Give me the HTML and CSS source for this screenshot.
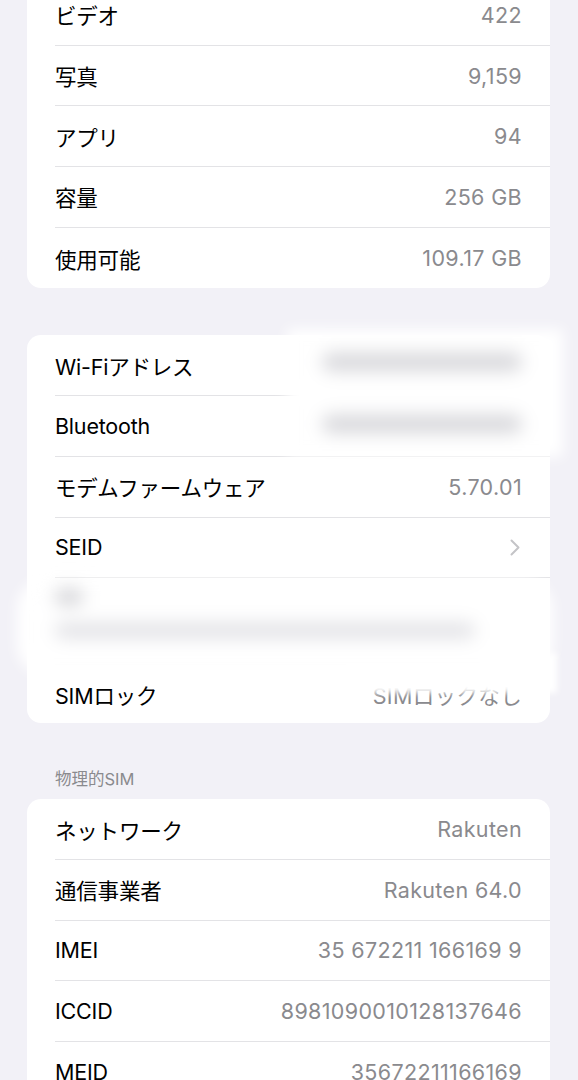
FILE: index.html
```html
<!DOCTYPE html>
<html lang="ja">
<head>
<meta charset="utf-8">
<link rel="stylesheet" href="styles.css">
</head>
<body>
<div class="page">
  <section class="card first">
    <div class="row"><span class="label">ビデオ</span><span class="value">422</span></div>
    <div class="row"><span class="label">写真</span><span class="value">9,159</span></div>
    <div class="row"><span class="label">アプリ</span><span class="value">94</span></div>
    <div class="row"><span class="label">容量</span><span class="value">256 GB</span></div>
    <div class="row last"><span class="label">使用可能</span><span class="value">109.17 GB</span></div>
  </section>

  <section class="card second">
    <div class="row"><span class="label">Wi-Fiアドレス</span><span class="value">00:00:00:00:00:00</span></div>
    <div class="row"><span class="label">Bluetooth</span><span class="value">00:00:00:00:00:00</span></div>
    <div class="row"><span class="label">モデムファームウェア</span><span class="value">5.70.01</span></div>
    <div class="row"><span class="label">SEID</span>
      <svg class="chev" width="10" height="17" viewBox="0 0 10 17"><polyline points="1.5,1.5 8.5,8.5 1.5,15.5" fill="none" stroke="#c4c4c7" stroke-width="2" stroke-linecap="round" stroke-linejoin="round"/></svg>
    </div>
    <div class="row tall"><span class="label">EID</span></div>
    <div class="row short"><span class="label">SIMロック</span><span class="value">SIMロックなし</span></div>

    <div class="blur blur-a">
      <div class="bar bar-a1"></div>
      <div class="bar bar-a2"></div>
    </div>
    <div class="blur blur-c"></div>
    <div class="blur blur-b">
      <div class="bar bar-b1"></div>
      <div class="bar bar-b2"></div>
    </div>
  </section>

  <h2 class="header">物理的SIM</h2>
  <section class="card third">
    <div class="row"><span class="label">ネットワーク</span><span class="value">Rakuten</span></div>
    <div class="row"><span class="label">通信事業者</span><span class="value">Rakuten 64.0</span></div>
    <div class="row"><span class="label">IMEI</span><span class="value">35 672211 166169 9</span></div>
    <div class="row"><span class="label">ICCID</span><span class="value">8981090010128137646</span></div>
    <div class="row"><span class="label">MEID</span><span class="value">35672211166169</span></div>
  </section>
</div>
</body>
</html>
```

FILE: styles.css
```css
html, body {
  margin: 0;
  padding: 0;
  background: #f2f1f7;
}
body {
  font-family: "Inter", "Noto Sans CJK JP", sans-serif;
  -webkit-font-smoothing: antialiased;
  overflow: hidden;
  height: 1080px;
}
.page {
  padding: 0 28px 0 27px;
  margin-top: -15px;
  display: flex;
  flex-direction: column;
}
.card {
  background: #ffffff;
  border-radius: 14px;
  padding-left: 28px;
  position: relative;
}
.first { margin-bottom: 47px; }
.row {
  height: 60.7px;
  box-sizing: border-box;
  display: flex;
  align-items: center;
  justify-content: space-between;
  padding-right: 28px;
  border-bottom: 1px solid #e3e3e6;
}
.row.last { border-bottom: none; }
.row.short { border-bottom: none; height: 58px; }
.row.tall { height: 87px; }
.label {
  font-size: 21.5px;
  color: #000000;
  letter-spacing: -0.2px;
}
.value {
  font-size: 21.5px;
  color: #8a8a8e;
  letter-spacing: 0.35px;
}
.chev { margin-right: 2px; }
.header {
  margin: 45px 0 9px 28px;
  font-size: 16.5px;
  font-weight: 400;
  color: #8a8a8e;
  line-height: 22px;
}
.blur {
  position: absolute;
  background: #ffffff;
  filter: blur(7px);
}
.blur-a {
  left: 260px;
  top: -6px;
  width: 276px;
  height: 128px;
}
.blur-b {
  left: -10px;
  top: 244px;
  width: 536px;
  height: 96px;
  border-radius: 30px;
}
.blur-c {
  left: 320px;
  top: 318px;
  width: 210px;
  height: 40px;
  filter: blur(3px);
}
.bar {
  position: absolute;
  background: #d6d6da;
  border-radius: 10px;
  filter: blur(6px);
}
.bar-a1 { left: 35px; top: 24px; width: 200px; height: 18px; }
.bar-a2 { left: 35px; top: 86px; width: 200px; height: 18px; }
.bar-b1 { left: 38px; top: 10px; width: 28px; height: 16px; background: #d2d2d6; }
.bar-b2 { left: 38px; top: 44px; width: 420px; height: 15px; background: #e0e0e4; }
```
